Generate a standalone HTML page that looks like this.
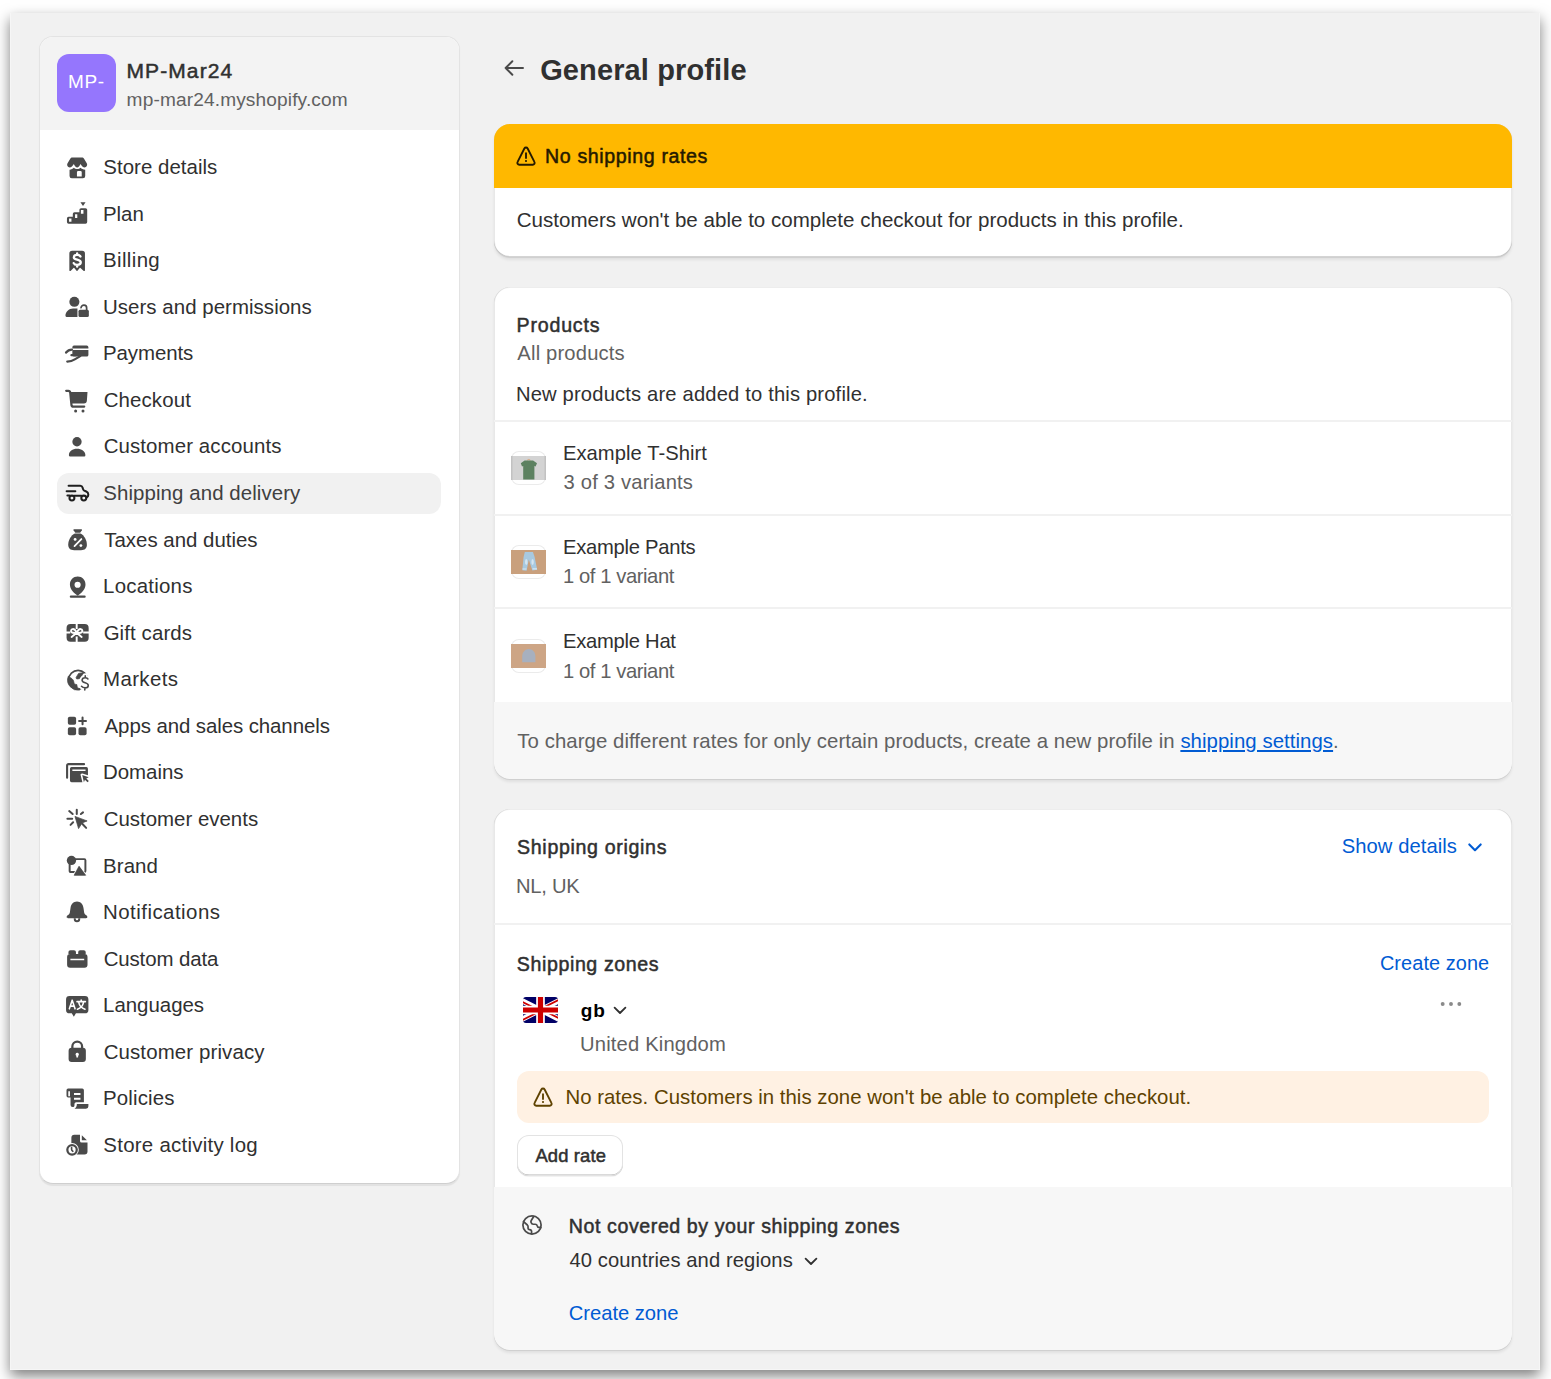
<!DOCTYPE html>
<html><head><meta charset="utf-8"><title>General profile</title>
<style>
html,body{margin:0;padding:0;background:#fff;width:1551px;height:1379px;overflow:hidden;}
body{font-family:"Liberation Sans",sans-serif;position:relative;}
.t{position:absolute;white-space:nowrap;}
.b{position:absolute;box-sizing:border-box;}
.i{position:absolute;overflow:visible;}
a{color:#005bd3;}
</style></head><body>
<div class="b" style="left:10px;top:13px;width:1530px;height:1357px;background:#f1f1f1;box-shadow:0 6px 13px rgba(0,0,0,.5), inset 1px 0 0 rgba(255,255,255,.4), inset -1px 0 0 rgba(255,255,255,.4), inset 0 -1px 0 rgba(255,255,255,.4);"></div>
<div class="b" style="left:39px;top:35.5px;width:420.5px;height:1148.5px;background:#fff;border-radius:14px;border:1px solid #e3e3e3;border-bottom-color:#cfcfcf;box-shadow:0 1.5px 1px rgba(26,26,26,.07);overflow:hidden;"></div>
<div class="b" style="left:40px;top:36.5px;width:418.5px;height:93.0px;background:#f3f3f3;border-radius:13px 13px 0 0;"></div>
<div class="b" style="left:57px;top:54px;width:58.5px;height:57.7px;background:#9576fd;border-radius:12px;"></div>
<div class="t" style="left:68.07px;top:70.31px;font-size:19px;line-height:24px;color:#fff;letter-spacing:0.539px;">MP-</div>
<div class="t" style="left:126.40px;top:58.42px;font-size:21px;line-height:26px;color:#303030;letter-spacing:1.123px;-webkit-text-stroke:0.5px currentColor;">MP-Mar24</div>
<div class="t" style="left:126.60px;top:87.88px;font-size:19.1px;line-height:24px;color:#616161;letter-spacing:0.136px;">mp-mar24.myshopify.com</div>
<div class="b" style="left:57px;top:473.2px;width:384px;height:40.50000000000006px;background:#f1f1f1;border-radius:12px;"></div>
<svg class="i" style="left:62px;top:152.5px;color:#4a4a4a;" width="30" height="30" viewBox="0 0 20 20" fill="#4a4a4a"><path d="M6.9 3.07H13.3C13.9 3.07 14.4 3.4 14.7 3.9L16.5 6.9C17.2 8.1 16.4 9.6 15 9.6C14.1 9.6 13.4 9 12.9 8.2L12.3 7.3L11.9 8.2C11.5 9 10.8 9.6 10.1 9.6C9.4 9.6 8.7 9 8.3 8.2L7.9 7.3L7.3 8.2C6.8 9 6.1 9.6 5.2 9.6C3.8 9.6 3 8.1 3.7 6.9L5.5 3.9C5.8 3.4 6.3 3.07 6.9 3.07Z"/><path fill-rule="evenodd" d="M5.03 11.1C6.3 11 7.2 10.6 7.86 9.85C8.4 10.4 9.2 10.7 10.1 10.7C11 10.7 11.8 10.4 12.35 9.85C13 10.6 14.1 11 15.47 11.1V15.35A1.5 1.5 0 0 1 13.97 16.85H6.53A1.5 1.5 0 0 1 5.03 15.35ZM9.96 15.69V12.8A.8.8 0 0 1 10.76 12H12.35A.8.8 0 0 1 13.15 12.8V15.69Z"/></svg>
<div class="t" style="left:103.32px;top:154.11px;font-size:20.45px;line-height:26px;color:#303030;letter-spacing:0.035px;">Store details</div>
<svg class="i" style="left:62px;top:199.06px;color:#4a4a4a;" width="30" height="30" viewBox="0 0 20 20" fill="#4a4a4a"><path d="M12.3 2.2H15.7L14 4.7Z"/><path fill-rule="evenodd" d="M3.3 13A1.1 1.1 0 0 1 4.4 11.9H7.2V10A1.1 1.1 0 0 1 8.3 8.9H11.6V7.2A1.1 1.1 0 0 1 12.7 6.1H15.7A1.1 1.1 0 0 1 16.8 7.2V15.4A1.1 1.1 0 0 1 15.7 16.5H4.4A1.1 1.1 0 0 1 3.3 15.4ZM4.7 13H6.3V15.2H4.7ZM8.7 10.2H10.2V12.7H8.7ZM12.6 7.4H14.3V9.9H12.6Z"/></svg>
<div class="t" style="left:103.06px;top:200.67px;font-size:20.45px;line-height:26px;color:#303030;letter-spacing:-0.068px;">Plan</div>
<svg class="i" style="left:62px;top:245.62px;color:#4a4a4a;" width="30" height="30" viewBox="0 0 20 20" fill="#4a4a4a"><path d="M6.8 3.1H13.4A1.9 1.9 0 0 1 15.3 5V16.2A.5.5 0 0 1 14.5 16.6L12.3 14.6A.4.4 0 0 0 11.8 14.6L10.3 16.5A.4.4 0 0 1 9.7 16.5L8.2 14.6A.4.4 0 0 0 7.7 14.6L5.7 16.6A.5.5 0 0 1 4.9 16.2V5A1.9 1.9 0 0 1 6.8 3.1Z"/><path fill="none" stroke="#fff" stroke-width="1.55" stroke-linecap="round" stroke-linejoin="round" d="M12.3 7C12 6.3 11.2 5.9 10.1 5.9C8.8 5.9 7.9 6.6 7.9 7.6C7.9 9.6 12.5 8.7 12.5 10.9C12.5 11.9 11.5 12.6 10.1 12.6C9 12.6 8.1 12.1 7.8 11.4M10.1 4.9V5.9M10.1 12.6V13.8"/></svg>
<div class="t" style="left:103.06px;top:247.23px;font-size:20.45px;line-height:26px;color:#303030;letter-spacing:0.357px;">Billing</div>
<svg class="i" style="left:62px;top:292.18px;color:#4a4a4a;" width="30" height="30" viewBox="0 0 20 20" fill="#4a4a4a"><circle cx="8.25" cy="6.55" r="3.35"/><path d="M2.3 15.9C2.3 13.2 4.6 11 7.4 11H10.3V16.6H3A.7.7 0 0 1 2.3 15.9Z"/><path d="M11 12.8A1 1 0 0 1 12 11.8H16.9A1 1 0 0 1 17.9 12.8V15.6A1 1 0 0 1 16.9 16.6H12A1 1 0 0 1 11 15.6Z"/><path fill="none" stroke="#4a4a4a" stroke-width="1.15" stroke-linecap="round" d="M12.7 10.5A1.86 1.86 0 0 1 16.42 10.7V12.2"/></svg>
<div class="t" style="left:103.03px;top:293.79px;font-size:20.45px;line-height:26px;color:#303030;letter-spacing:0.044px;">Users and permissions</div>
<svg class="i" style="left:62px;top:338.74px;color:#4a4a4a;" width="30" height="30" viewBox="0 0 20 20" fill="#4a4a4a"><path fill-rule="evenodd" d="M8 4.4H16.5A1.1 1.1 0 0 1 17.6 5.5V10.6A1.1 1.1 0 0 1 16.5 11.7H8A1.1 1.1 0 0 1 6.9 10.6V5.5A1.1 1.1 0 0 1 8 4.4ZM6.9 6.3V7.3H17.6V6.3Z"/><path fill="none" stroke="#4a4a4a" stroke-width="1.5" stroke-linecap="round" d="M2.7 9C3.6 7.8 4.8 7 6.6 7M3.5 15C5.5 15 7 14.6 8.5 13.6L12.2 11.4M6.3 10.8H9.3"/></svg>
<div class="t" style="left:103.06px;top:340.35px;font-size:20.45px;line-height:26px;color:#303030;letter-spacing:-0.091px;">Payments</div>
<svg class="i" style="left:62px;top:385.3px;color:#4a4a4a;" width="30" height="30" viewBox="0 0 20 20" fill="#4a4a4a"><path fill="none" stroke="#4a4a4a" stroke-width="1.5" stroke-linecap="round" stroke-linejoin="round" d="M2.8 3.9H4.2C4.9 3.9 5.4 4.4 5.5 5.1L6.3 13.1C6.3 13.8 6.9 14.4 7.6 14.4H14.8"/><path d="M5.6 4.7H17L16.6 10.4A2 2 0 0 1 14.6 12.3H6.5Z"/><circle cx="9.1" cy="17.3" r="1"/><circle cx="14" cy="17.3" r="1"/></svg>
<div class="t" style="left:103.64px;top:386.91px;font-size:20.45px;line-height:26px;color:#303030;letter-spacing:0.122px;">Checkout</div>
<svg class="i" style="left:62px;top:431.86px;color:#4a4a4a;" width="30" height="30" viewBox="0 0 20 20" fill="#4a4a4a"><circle cx="10" cy="6.5" r="3.1"/><path d="M4.6 15.5C4.6 13 7 11.2 10 11.2C13 11.2 15.6 13 15.6 15.5A.8.8 0 0 1 14.8 16.3H5.4A.8.8 0 0 1 4.6 15.5Z"/></svg>
<div class="t" style="left:103.64px;top:433.47px;font-size:20.45px;line-height:26px;color:#303030;letter-spacing:0.108px;">Customer accounts</div>
<svg class="i" style="left:62px;top:478.42px;color:#4a4a4a;" width="30" height="30" viewBox="0 0 20 20" fill="#4a4a4a"><g fill="none" stroke="#1f1f1f" stroke-width="1.35" stroke-linecap="round" stroke-linejoin="round"><path d="M4.4 5.1H12.2C12.9 5.1 13.5 5.6 13.7 6.3L14 7.3C14.2 8 14.7 8.5 15.4 8.7L16.2 9C17 9.3 17.5 10 17.5 10.8V11.4C17.5 12 17.2 12.5 16.7 12.8"/><path d="M3.1 8.8H8.9"/><path d="M3.6 11.7H5M8.2 11.9H12.9"/><circle cx="6.62" cy="13.4" r="1.65"/><circle cx="14.53" cy="13.4" r="1.65"/></g></svg>
<div class="t" style="left:103.32px;top:480.03px;font-size:20.45px;line-height:26px;color:#404040;letter-spacing:0.079px;">Shipping and delivery</div>
<svg class="i" style="left:62px;top:524.98px;color:#4a4a4a;" width="30" height="30" viewBox="0 0 20 20" fill="#4a4a4a"><path d="M8.1 2.75H12.85A.5.5 0 0 1 13.25 3.5L12.1 5.2H8.85L7.7 3.5A.5.5 0 0 1 8.1 2.75Z"/><path d="M8.6 5.6H12.3C14.8 6.8 16.6 10 16.6 13.2C16.6 15.6 15.2 16.8 12.7 16.8H8.1C5.5 16.8 4.15 15.6 4.15 13.2C4.15 10 6 6.8 8.6 5.6Z"/><path fill="none" stroke="#fff" stroke-width="1.2" stroke-linecap="round" d="M8.35 14.1L12.9 9.35"/><circle cx="8.75" cy="9.6" r=".95" fill="#fff"/><circle cx="12.6" cy="13.7" r=".95" fill="#fff"/></svg>
<div class="t" style="left:104.25px;top:526.59px;font-size:20.45px;line-height:26px;color:#303030;letter-spacing:-0.007px;">Taxes and duties</div>
<svg class="i" style="left:62px;top:571.54px;color:#4a4a4a;" width="30" height="30" viewBox="0 0 20 20" fill="#4a4a4a"><path fill-rule="evenodd" d="M10.47 3C13.4 3 15.66 5.3 15.66 8.3C15.66 11.2 13.6 13.5 11.3 15.2L10.47 15.9L9.65 15.2C7.3 13.5 5.28 11.2 5.28 8.3C5.28 5.3 7.5 3 10.47 3ZM10.4 6.45A2.05 2.05 0 1 0 10.4 10.55A2.05 2.05 0 1 0 10.4 6.45Z"/><path fill="none" stroke="#4a4a4a" stroke-width="1.45" stroke-linecap="round" d="M5.9 16.45H15.1"/></svg>
<div class="t" style="left:103.06px;top:573.15px;font-size:20.45px;line-height:26px;color:#303030;letter-spacing:0.239px;">Locations</div>
<svg class="i" style="left:62px;top:618.1px;color:#4a4a4a;" width="30" height="30" viewBox="0 0 20 20" fill="#4a4a4a"><rect x="3.05" y="3.99" width="14.72" height="11.82" rx="2.6"/><g fill="none" stroke="#fff" stroke-width="1.3" stroke-linecap="round" stroke-linejoin="round"><path stroke-linecap="butt" d="M9.79 3.5V7.4M9.79 12.4V16.3M2.5 9.72H5.5M14.1 9.72H18.3"/><path d="M9.79 9.9C9.2 8.6 8.3 7.3 7.1 7.4C6 7.5 5.7 8.9 6.4 9.5C7.1 10.1 8.6 10 9.79 9.9ZM9.79 9.9C10.4 8.6 11.3 7.3 12.5 7.4C13.6 7.5 13.9 8.9 13.2 9.5C12.5 10.1 11 10 9.79 9.9Z"/><path d="M9.79 9.9L6.4 12.6M9.79 9.9L13.1 12.6"/></g></svg>
<div class="t" style="left:103.64px;top:619.71px;font-size:20.45px;line-height:26px;color:#303030;letter-spacing:0.103px;">Gift cards</div>
<svg class="i" style="left:62px;top:664.66px;color:#4a4a4a;" width="30" height="30" viewBox="0 0 20 20" fill="#4a4a4a"><mask id="mk"><rect x="-2" y="-2" width="24" height="24" fill="#fff"/><path d="M17.3 9.3C16.9 8.8 16.2 8.5 15.4 8.5C14.2 8.5 13.4 9.2 13.4 10.2C13.4 12.3 17.5 11.5 17.5 13.6C17.5 14.6 16.6 15.2 15.4 15.2C14.4 15.2 13.5 14.8 13 14.2M15.5 7.2V8.5M15.2 15.2V16.6" stroke="#000" stroke-width="3.3" fill="none" stroke-linecap="round" stroke-linejoin="round"/></mask><g mask="url(#mk)"><circle cx="10.72" cy="9.86" r="6.3" fill="none" stroke="#4a4a4a" stroke-width="1.05"/><path stroke="#4a4a4a" stroke-width=".5" stroke-linejoin="round" d="M4.2 7.5L4.93 7.97C6.3 8.8 7.4 9.6 7.69 10.58L8.12 12.32C8.3 12.8 9.1 12.9 9.86 13.05L10.15 14.79C10.5 15.3 11.2 15.6 12 15.8L12 16.6A6.8 6.8 0 0 1 4.2 7.5Z"/><path stroke="#4a4a4a" stroke-width=".5" stroke-linejoin="round" d="M15.2 5.2C14 5 12.4 5.3 11.02 5.65L9.43 8.26C9.3 8.9 9.7 9.3 10.15 9.28L11.6 9.13L13.78 6.38Z"/></g><path d="M17.3 9.3C16.9 8.8 16.2 8.5 15.4 8.5C14.2 8.5 13.4 9.2 13.4 10.2C13.4 12.3 17.5 11.5 17.5 13.6C17.5 14.6 16.6 15.2 15.4 15.2C14.4 15.2 13.5 14.8 13 14.2M15.5 7.2V8.5M15.2 15.2V16.6" stroke="#4a4a4a" stroke-width="1.05" fill="none" stroke-linecap="round" stroke-linejoin="round"/></svg>
<div class="t" style="left:103.06px;top:666.27px;font-size:20.45px;line-height:26px;color:#303030;letter-spacing:0.366px;">Markets</div>
<svg class="i" style="left:62px;top:711.22px;color:#4a4a4a;" width="30" height="30" viewBox="0 0 20 20" fill="#4a4a4a"><rect x="3.9" y="3.8" width="5.5" height="5.4" rx="1.2"/><rect x="3.9" y="10.8" width="5.5" height="5.4" rx="1.2"/><rect x="11" y="10.8" width="5.4" height="5.4" rx="1.2"/><path fill="none" stroke="#4a4a4a" stroke-width="1.35" stroke-linecap="round" d="M13.7 4.3V8.9M11.4 6.6H16"/></svg>
<div class="t" style="left:104.59px;top:712.83px;font-size:20.45px;line-height:26px;color:#303030;letter-spacing:-0.089px;">Apps and sales channels</div>
<svg class="i" style="left:62px;top:757.78px;color:#4a4a4a;" width="30" height="30" viewBox="0 0 20 20" fill="#4a4a4a"><path fill="none" stroke="#4a4a4a" stroke-width="1.4" stroke-linecap="round" d="M3.4 13.2V5A.9.9 0 0 1 4.3 4.1H14.7"/><path fill-rule="evenodd" d="M6.4 6H16.2A1.1 1.1 0 0 1 17.3 7.1V11.5L13.6 10.3C12.9 10.1 12.2 10.7 12.4 11.4L13.6 16.1H6.4A1.1 1.1 0 0 1 5.3 15V7.1A1.1 1.1 0 0 1 6.4 6ZM6.9 7.7V8.7H15.7V7.7Z"/><path d="M13.5 11.3L17.8 12.8L16.2 13.6L17.9 15.3L17 16.2L15.3 14.5L14.6 16.1Z"/></svg>
<div class="t" style="left:103.06px;top:759.39px;font-size:20.45px;line-height:26px;color:#303030;letter-spacing:-0.042px;">Domains</div>
<svg class="i" style="left:62px;top:804.34px;color:#4a4a4a;" width="30" height="30" viewBox="0 0 20 20" fill="#4a4a4a"><path stroke="#4a4a4a" stroke-width=".5" stroke-linejoin="round" d="M8.65 8.28L16.74 11.3L13.4 12.6L11.05 16.4Z"/><path fill="none" stroke="#4a4a4a" stroke-width="1.35" stroke-linecap="round" d="M13.5 13.2L16.1 15.9M9.85 3.8V6.7M3.6 9.8H6.8M4.8 4.7L7.1 6.7M12.6 6.7L14 5.6M5.7 13.9L7.4 12.2"/></svg>
<div class="t" style="left:103.64px;top:805.95px;font-size:20.45px;line-height:26px;color:#303030;letter-spacing:0.000px;">Customer events</div>
<svg class="i" style="left:62px;top:850.9px;color:#4a4a4a;" width="30" height="30" viewBox="0 0 20 20" fill="#4a4a4a"><path fill="none" stroke="#4a4a4a" stroke-width="1.3" stroke-linejoin="round" d="M5.1 6.3V13.3A.7.7 0 0 0 5.8 14H14.9A.7.7 0 0 0 15.6 13.3V6.1A.7.7 0 0 0 14.9 5.4H6"/><circle cx="6.3" cy="6.3" r="3.1"/><path stroke="#fff" stroke-width="1" stroke-linejoin="round" d="M7.6 16.6L11.35 9.3L16.3 16.6Z"/><path stroke="#4a4a4a" stroke-width=".4" stroke-linejoin="round" d="M8.05 16.2L11.35 10.1L15.84 16.2Z"/></svg>
<div class="t" style="left:103.06px;top:852.51px;font-size:20.45px;line-height:26px;color:#303030;letter-spacing:0.078px;">Brand</div>
<svg class="i" style="left:62px;top:897.46px;color:#4a4a4a;" width="30" height="30" viewBox="0 0 20 20" fill="#4a4a4a"><path d="M10 3C12.4 3 14 4.9 14.3 7.2L14.8 10.5C14.9 11.1 15.3 11.6 15.9 12C16.3 12.3 16.9 12.6 16.9 13.3C16.9 13.8 16.5 14.1 16 14.1H4C3.5 14.1 3.1 13.8 3.1 13.3C3.1 12.6 3.7 12.3 4.1 12C4.7 11.6 5.1 11.1 5.2 10.5L5.7 7.2C6 4.9 7.6 3 10 3Z"/><path fill="none" stroke="#4a4a4a" stroke-width="1.3" d="M8.5 14.1V14.6A1.5 1.5 0 0 0 11.5 14.6V14.1"/></svg>
<div class="t" style="left:103.06px;top:899.07px;font-size:20.45px;line-height:26px;color:#303030;letter-spacing:0.464px;">Notifications</div>
<svg class="i" style="left:62px;top:944.02px;color:#4a4a4a;" width="30" height="30" viewBox="0 0 20 20" fill="#4a4a4a"><path fill-rule="evenodd" d="M5.6 4.1H8A1.3 1.3 0 0 1 9.3 5.4V6.6H10.8V5.4A1.3 1.3 0 0 1 12.1 4.1H14.5A1.3 1.3 0 0 1 15.8 5.4V6.6H15A2 2 0 0 1 17 8.6V13.8A2 2 0 0 1 15 15.8H5.4A2 2 0 0 1 3.4 13.8V8.6A2 2 0 0 1 5.4 6.6H4.3V5.4A1.3 1.3 0 0 1 5.6 4.1ZM5.6 9.8V10.8H14.8V9.8Z"/></svg>
<div class="t" style="left:103.64px;top:945.63px;font-size:20.45px;line-height:26px;color:#303030;letter-spacing:-0.115px;">Custom data</div>
<svg class="i" style="left:62px;top:990.58px;color:#4a4a4a;" width="30" height="30" viewBox="0 0 20 20" fill="#4a4a4a"><path fill-rule="evenodd" d="M5 3.3H15.3A2.3 2.3 0 0 1 17.6 5.6V12.6A2.3 2.3 0 0 1 15.3 14.9H9.3L7.9 17.2L6.5 14.9H5A2.3 2.3 0 0 1 2.7 12.6V5.6A2.3 2.3 0 0 1 5 3.3Z"/><g fill="none" stroke="#fff" stroke-width="1.05" stroke-linecap="round" stroke-linejoin="round"><path d="M4.9 11.9L6.8 6.1L8.7 11.9M5.5 10.1H8.1"/><path d="M10 7.1H15.6M12.8 6V7.1M14.3 7.8C13.8 10.2 12.2 11.6 10.3 12.2M11.2 7.8C11.7 10.2 13.3 11.6 15.3 12.2"/></g></svg>
<div class="t" style="left:103.06px;top:992.19px;font-size:20.45px;line-height:26px;color:#303030;letter-spacing:-0.014px;">Languages</div>
<svg class="i" style="left:62px;top:1037.14px;color:#4a4a4a;" width="30" height="30" viewBox="0 0 20 20" fill="#4a4a4a"><path fill="none" stroke="#4a4a4a" stroke-width="1.5" d="M6.9 7.6V6.4A3.25 3.25 0 0 1 13.4 6.4V7.6"/><path fill-rule="evenodd" d="M6.4 7.2H13.9A2 2 0 0 1 15.9 9.2V14.6A2 2 0 0 1 13.9 16.6H6.4A2 2 0 0 1 4.4 14.6V9.2A2 2 0 0 1 6.4 7.2ZM10.15 10.5A1.1 1.1 0 0 0 9.5 12.5L9.6 13.6H10.7L10.8 12.5A1.1 1.1 0 0 0 10.15 10.5Z"/></svg>
<div class="t" style="left:103.64px;top:1038.75px;font-size:20.45px;line-height:26px;color:#303030;letter-spacing:0.125px;">Customer privacy</div>
<svg class="i" style="left:62px;top:1083.7px;color:#4a4a4a;" width="30" height="30" viewBox="0 0 20 20" fill="#4a4a4a"><path fill-rule="evenodd" d="M4.1 3H13.5A1.1 1.1 0 0 1 14.6 4.1V12.2H9.6C8.8 12.2 8.3 12.8 8.3 13.6V14.3C8.3 14.9 7.7 15.4 7.1 15.4A1.4 1.4 0 0 1 5.7 14V9H4.1A1.1 1.1 0 0 1 3 7.9V4.1A1.1 1.1 0 0 1 4.1 3ZM4.2 4.8H5.3V8.1H4.2ZM8 6H12.3V7.3H8ZM8 9.2H12.3V10.5H8Z"/><path d="M9.9 13.3H17.6V14.9A1.6 1.6 0 0 1 16 16.5H8.3C9.3 16 9.9 15 9.9 13.3Z"/></svg>
<div class="t" style="left:103.06px;top:1085.31px;font-size:20.45px;line-height:26px;color:#303030;letter-spacing:0.135px;">Policies</div>
<svg class="i" style="left:62px;top:1130.26px;color:#4a4a4a;" width="30" height="30" viewBox="0 0 20 20" fill="#4a4a4a"><path d="M8.3 3.1H12V7.3A1.1 1.1 0 0 0 13.1 8.4H17V14.3A2 2 0 0 1 15 16.3H9A2 2 0 0 1 6.25 14.3V5.1A2 2 0 0 1 8.3 3.1Z"/><path d="M13.2 3.5L16.6 6.9H13.2Z"/><circle cx="6.7" cy="13.2" r="4.5" fill="#fff"/><circle cx="6.7" cy="13.2" r="3.15" fill="none" stroke="#4a4a4a" stroke-width="1.5"/><path fill="none" stroke="#4a4a4a" stroke-width="1.1" stroke-linecap="round" d="M6.4 11.7V12.9C6.4 13.4 6.7 13.9 7.2 14.2"/></svg>
<div class="t" style="left:103.32px;top:1131.87px;font-size:20.45px;line-height:26px;color:#303030;letter-spacing:0.259px;">Store activity log</div>
<svg class="i" style="left:499px;top:53.2px;color:#4a4a4a;" width="30" height="30" viewBox="0 0 20 20" fill="#4a4a4a"><path fill="none" stroke="#4a4a4a" stroke-width="1.3" stroke-linecap="round" stroke-linejoin="round" d="M16 10H4.4M8.9 5.5L4.4 10L8.9 14.5"/></svg>
<div class="t" style="left:540.13px;top:51.75px;font-size:29px;line-height:36px;color:#303030;font-weight:700;letter-spacing:0.130px;">General profile</div>
<div class="b" style="left:494px;top:124px;width:1018px;height:133px;background:#fff;border-radius:16px;box-shadow:inset 1px 0 0 rgba(0,0,0,.09), inset -1px 0 0 rgba(0,0,0,.09), inset 0 1px 0 rgba(0,0,0,.07), inset 0 -1px 0 rgba(0,0,0,.17), 0 1px 0 rgba(0,0,0,.07), 0 2.5px 3px rgba(0,0,0,.07);overflow:hidden;"><div style="position:absolute;left:0;top:0;right:0;height:64px;background:#ffb800;"></div></div>
<svg class="i" style="left:510.55px;top:140.75px;color:#251a00;" width="30" height="30" viewBox="0 0 20 20" fill="#251a00"><path fill="none" stroke="currentColor" stroke-width="1.25" stroke-linejoin="round" d="M8.9 5.0C9.4 4.1 10.6 4.1 11.1 5.0L15.6 13.9C16.1 14.8 15.5 15.85 14.5 15.85H5.5C4.5 15.85 3.9 14.8 4.4 13.9Z"/><path fill="none" stroke="currentColor" stroke-width="1.25" stroke-linecap="round" d="M10 8.1V11.3"/><circle cx="10" cy="13.35" r=".72" fill="currentColor"/></svg>
<div class="t" style="left:545.04px;top:144.00px;font-size:19.6px;line-height:24px;color:#251a00;letter-spacing:0.619px;-webkit-text-stroke:0.5px currentColor;">No shipping rates</div>
<div class="t" style="left:516.71px;top:207.18px;font-size:20.55px;line-height:26px;color:#303030;letter-spacing:0.010px;">Customers won't be able to complete checkout for products in this profile.</div>
<div class="b" style="left:494px;top:287px;width:1018px;height:492px;background:#fff;border-radius:16px;box-shadow:inset 1px 0 0 rgba(0,0,0,.09), inset -1px 0 0 rgba(0,0,0,.09), inset 0 1px 0 rgba(0,0,0,.07), inset 0 -1px 0 rgba(0,0,0,.17), 0 1px 0 rgba(0,0,0,.07), 0 2.5px 3px rgba(0,0,0,.07);overflow:hidden;"><div style="position:absolute;left:0;right:0;top:133px;height:2px;background:#f1f1f1"></div><div style="position:absolute;left:0;right:0;top:227px;height:2px;background:#f1f1f1"></div><div style="position:absolute;left:0;right:0;top:320px;height:2px;background:#f1f1f1"></div><div style="position:absolute;left:0;right:0;top:415px;bottom:0;background:#f7f7f7"></div></div>
<div class="t" style="left:516.50px;top:313.00px;font-size:19.6px;line-height:24px;color:#303030;letter-spacing:0.812px;-webkit-text-stroke:0.5px currentColor;">Products</div>
<div class="t" style="left:517.37px;top:341.10px;font-size:20.2px;line-height:25px;color:#616161;letter-spacing:0.168px;">All products</div>
<div class="t" style="left:515.98px;top:382.10px;font-size:20.2px;line-height:25px;color:#303030;letter-spacing:0.160px;">New products are added to this profile.</div>
<div class="b" style="left:511px;top:451px;width:35px;height:34px;background:#fff;border-radius:8px;box-shadow:inset 0 0 0 1px #ebebeb;"></div>
<svg class="i" style="left:511px;top:456.2px;color:none;" width="35" height="24" viewBox="0 0 35 24" fill="none"><rect width="35" height="24" fill="#d3d3d3"/><rect x="0" y="0" width="1.5" height="24" fill="#c2c2c2"/><rect x="33.5" y="0" width="1.5" height="24" fill="#c2c2c2"/><path d="M16.2 4.2Q17.8 2.8 19.4 4.2" stroke="#d9a57a" stroke-width="1" fill="none"/><path d="M13.6 4.4H22.1L26 7.3L24.6 10.4L23.4 9.9V23.4H12.2V9.9L11 10.4L9.8 7.3Z" fill="#5c8160"/></svg>
<div class="t" style="left:562.93px;top:441.00px;font-size:20.2px;line-height:25px;color:#303030;letter-spacing:0.053px;">Example T-Shirt</div>
<div class="t" style="left:563.57px;top:470.10px;font-size:20.2px;line-height:25px;color:#616161;letter-spacing:0.183px;">3 of 3 variants</div>
<div class="b" style="left:511px;top:544.8px;width:35px;height:34.0px;background:#fff;border-radius:8px;box-shadow:inset 0 0 0 1px #ebebeb;"></div>
<svg class="i" style="left:511px;top:550.0px;color:none;" width="35" height="24" viewBox="0 0 35 24" fill="none"><rect width="35" height="24" fill="#c9a07d"/><path d="M13.8 2H21.9L23.5 6.5L26.2 19.8L21.4 20.4L17.8 9.6L15.6 20.8L11.3 20.3L12.6 7Z" fill="#a8c9e0"/><ellipse cx="15.3" cy="12" rx="1.3" ry="3" fill="#d4e5f0"/><ellipse cx="21.6" cy="12" rx="1.2" ry="3" fill="#d4e5f0"/><path d="M11.5 19H15.5M21.5 18.8H26" stroke="#d8e8f2" stroke-width="1.2"/></svg>
<div class="t" style="left:562.93px;top:535.20px;font-size:20.2px;line-height:25px;color:#303030;letter-spacing:-0.258px;">Example Pants</div>
<div class="t" style="left:562.97px;top:564.30px;font-size:20.2px;line-height:25px;color:#616161;letter-spacing:-0.411px;">1 of 1 variant</div>
<div class="b" style="left:511px;top:638.5px;width:35px;height:34.0px;background:#fff;border-radius:8px;box-shadow:inset 0 0 0 1px #ebebeb;"></div>
<svg class="i" style="left:511px;top:643.7px;color:none;" width="35" height="24" viewBox="0 0 35 24" fill="none"><rect width="35" height="24" fill="#cda585"/><path d="M11.2 18.3V12.5C11.2 8.4 14.1 5 17.8 5C21.5 5 24.4 8.4 24.4 12.5V18.3Z" fill="#a7b0bf"/></svg>
<div class="t" style="left:562.93px;top:629.40px;font-size:20.2px;line-height:25px;color:#303030;letter-spacing:-0.251px;">Example Hat</div>
<div class="t" style="left:562.97px;top:658.50px;font-size:20.2px;line-height:25px;color:#616161;letter-spacing:-0.411px;">1 of 1 variant</div>
<div class="t" style="left:517.33px;top:728.94px;font-size:20.37px;line-height:25px;color:#616161;letter-spacing:0.062px;">To charge different rates for only certain products, create a new profile in <a style="color:#005bd3;text-decoration:underline;text-underline-offset:2px">shipping settings</a>.</div>
<div class="b" style="left:494px;top:809px;width:1018px;height:541px;background:#fff;border-radius:16px;box-shadow:inset 1px 0 0 rgba(0,0,0,.09), inset -1px 0 0 rgba(0,0,0,.09), inset 0 1px 0 rgba(0,0,0,.07), inset 0 -1px 0 rgba(0,0,0,.17), 0 1px 0 rgba(0,0,0,.07), 0 2.5px 3px rgba(0,0,0,.07);overflow:hidden;"><div style="position:absolute;left:0;right:0;top:114px;height:2px;background:#f1f1f1"></div><div style="position:absolute;left:0;right:0;top:378px;bottom:0;background:#f7f7f7"></div></div>
<div class="t" style="left:517.07px;top:834.60px;font-size:19.6px;line-height:24px;color:#303030;letter-spacing:0.666px;-webkit-text-stroke:0.5px currentColor;">Shipping origins</div>
<div class="t" style="left:1341.69px;top:833.70px;font-size:20.2px;line-height:25px;color:#005bd3;letter-spacing:0.072px;">Show details</div>
<svg class="i" style="left:1460px;top:831.5px;color:#005bd3;" width="30" height="30" viewBox="0 0 20 20" fill="#005bd3"><path fill="none" stroke="#005bd3" stroke-width="1.4" stroke-linecap="round" stroke-linejoin="round" d="M6.2 8.3L10 12.1L13.8 8.3"/></svg>
<div class="t" style="left:515.98px;top:874.30px;font-size:20.2px;line-height:25px;color:#616161;letter-spacing:-0.274px;">NL, UK</div>
<div class="t" style="left:516.87px;top:951.70px;font-size:19.6px;line-height:24px;color:#303030;letter-spacing:0.593px;-webkit-text-stroke:0.5px currentColor;">Shipping zones</div>
<div class="t" style="left:1379.91px;top:950.80px;font-size:19.9px;line-height:25px;color:#005bd3;letter-spacing:0.092px;">Create zone</div>
<svg class="i" style="left:523px;top:997px;color:none;" width="35" height="26" viewBox="0 0 35 26" fill="none"><defs><clipPath id="fc"><rect x="0" y="0" width="35" height="26" rx="3"/></clipPath><clipPath id="ft"><path d="M30,15 h30 v15 z v15 h-30 z h-30 v-15 z v-15 h30 z"/></clipPath></defs><g clip-path="url(#fc)"><g transform="translate(-8.5,0) scale(0.86667)"><rect width="60" height="30" fill="#010066"/><path d="M0,0 L60,30 M60,0 L0,30" stroke="#fff" stroke-width="6"/><path d="M0,0 L60,30 M60,0 L0,30" clip-path="url(#ft)" stroke="#cc0000" stroke-width="4"/><path d="M30,0 v30 M0,15 h60" stroke="#fff" stroke-width="10"/><path d="M30,0 v30 M0,15 h60" stroke="#cc0000" stroke-width="6"/></g></g></svg>
<div class="t" style="left:580.77px;top:998.71px;font-size:19px;line-height:24px;color:#000;font-weight:700;letter-spacing:0.992px;">gb</div>
<svg class="i" style="left:604.65px;top:994.7px;color:#303030;" width="30" height="30" viewBox="0 0 20 20" fill="#303030"><path fill="none" stroke="#303030" stroke-width="1.2" stroke-linecap="round" stroke-linejoin="round" d="M6.4 8.4L10 12L13.6 8.4"/></svg>
<svg class="i" style="left:1436.4px;top:988.7px;color:#8a8a8a;" width="30" height="30" viewBox="0 0 20 20" fill="#8a8a8a"><circle cx="4.45" cy="10" r="1.3"/><circle cx="10" cy="10" r="1.3"/><circle cx="15.55" cy="10" r="1.3"/></svg>
<div class="t" style="left:580.09px;top:1032.20px;font-size:20.2px;line-height:25px;color:#616161;letter-spacing:0.159px;">United Kingdom</div>
<div class="b" style="left:517px;top:1071px;width:971.5px;height:52px;background:#fff1e3;border-radius:12px;"></div>
<svg class="i" style="left:528.25px;top:1082.4px;color:#5e4200;" width="30" height="30" viewBox="0 0 20 20" fill="#5e4200"><path fill="none" stroke="currentColor" stroke-width="1.25" stroke-linejoin="round" d="M8.9 5.0C9.4 4.1 10.6 4.1 11.1 5.0L15.6 13.9C16.1 14.8 15.5 15.85 14.5 15.85H5.5C4.5 15.85 3.9 14.8 4.4 13.9Z"/><path fill="none" stroke="currentColor" stroke-width="1.25" stroke-linecap="round" d="M10 8.1V11.3"/><circle cx="10" cy="13.35" r=".72" fill="currentColor"/></svg>
<div class="t" style="left:565.43px;top:1084.53px;font-size:20.38px;line-height:25px;color:#5e4200;letter-spacing:0.025px;">No rates. Customers in this zone won't be able to complete checkout.</div>
<div class="b" style="left:517px;top:1135px;width:106px;height:40.5px;background:#fff;border-radius:12px;box-shadow:inset 0 0 0 1px #e3e3e3, inset 0 -1.5px 0 #b5b5b5, 0 1px 0 rgba(0,0,0,.05);"></div>
<div class="t" style="left:535.48px;top:1143.92px;font-size:18.4px;line-height:23px;color:#303030;letter-spacing:0.130px;-webkit-text-stroke:0.5px currentColor;">Add rate</div>
<svg class="i" style="left:516.75px;top:1209.9px;color:#4a4a4a;" width="30" height="30" viewBox="0 0 20 20" fill="#4a4a4a"><g fill="none" stroke="#4a4a4a" stroke-width="1.15" stroke-linecap="round" stroke-linejoin="round"><circle cx="10" cy="10" r="6.07"/><path d="M4.37 7.75L6.9 10C7.2 10.3 7.37 10.7 7.37 11.1V12.2C7.37 12.5 7.6 12.8 7.9 12.9L9 13.2C9.4 13.3 9.7 13.7 9.7 14.1V15.8"/><path d="M11.14 4.3L9.5 7C9.3 7.4 9.2 8 9.4 8.4C9.6 9 10.1 9.5 10.8 9.5H12.2C12.8 9.5 13.3 9.9 13.5 10.5L13.7 11C13.8 11.4 14.2 11.6 14.6 11.6H15.9"/></g></svg>
<div class="t" style="left:568.83px;top:1213.50px;font-size:19.6px;line-height:24px;color:#303030;letter-spacing:0.579px;-webkit-text-stroke:0.5px currentColor;">Not covered by your shipping zones</div>
<div class="t" style="left:569.41px;top:1247.50px;font-size:20.2px;line-height:25px;color:#303030;letter-spacing:0.099px;">40 countries and regions</div>
<svg class="i" style="left:796.15px;top:1246.2px;color:#303030;" width="30" height="30" viewBox="0 0 20 20" fill="#303030"><path fill="none" stroke="#303030" stroke-width="1.2" stroke-linecap="round" stroke-linejoin="round" d="M6.4 8.4L10 12L13.6 8.4"/></svg>
<div class="t" style="left:568.83px;top:1300.90px;font-size:20.2px;line-height:25px;color:#005bd3;letter-spacing:-0.039px;">Create zone</div>
</body></html>
